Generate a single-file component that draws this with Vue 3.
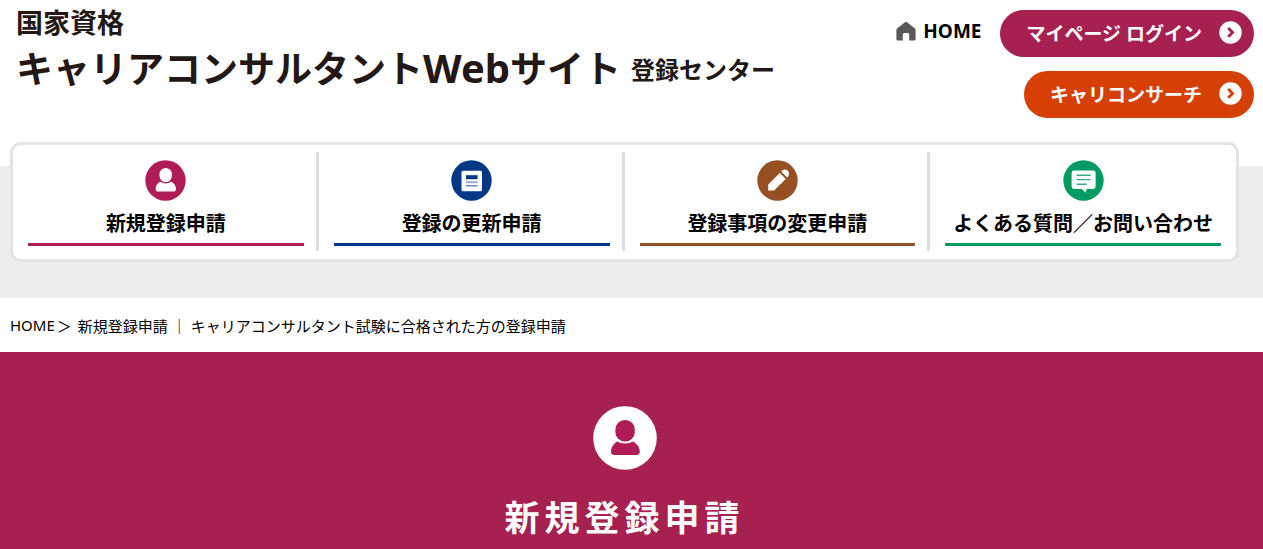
<script setup>
const menu = [
  { id: 'new', label: '新規登録申請', icon: 'person' },
  { id: 'renew', label: '登録の更新申請', icon: 'document' },
  { id: 'change', label: '登録事項の変更申請', icon: 'pencil' },
  { id: 'faq', label: 'よくある質問／お問い合わせ', icon: 'chat' },
]
const actions = [
  { id: 'login', label: 'マイページ ログイン' },
  { id: 'search', label: 'キャリコンサーチ' },
]
</script>

<template>
  <div class="page">
    <header class="header">
      <a class="logo" href="#">
        <span class="logo-top">国家資格</span>
        <span class="logo-main">
          <span class="logo-name">キャリアコンサルタント<span class="logo-web">Web</span>サイト</span>
          <span class="logo-sub">登録センター</span>
        </span>
      </a>
      <div class="tools">
        <a class="home" href="#">
          <svg width="20" height="20" viewBox="0 0 20 20" aria-hidden="true">
            <path d="M10 0.5 L19 7.4 Q19.6 8 19.6 9 V18 Q19.6 19.5 18 19.5 H13.2 V13.5 Q13.2 12 11.8 12 H8.2 Q6.8 12 6.8 13.5 V19.5 H2 Q0.4 19.5 0.4 18 V9 Q0.4 8 1 7.4 Z" fill="#595757" />
          </svg>
          HOME
        </a>
        <div class="actions">
          <a v-for="a in actions" :key="a.id" class="pill" :class="a.id" href="#">
            {{ a.label }}
            <svg width="23" height="23" viewBox="0 0 23 23" aria-hidden="true">
              <circle cx="11.5" cy="11.5" r="11.2" fill="#fff" />
              <path d="M9.2 7 L13.6 11.4 L9.2 15.8" fill="none" stroke="currentColor" stroke-width="2.8" />
            </svg>
          </a>
        </div>
      </div>
    </header>

    <div class="band">
      <nav class="menu">
        <div v-for="m in menu" :key="m.id" class="cell">
          <a class="item" :class="m.id" href="#">
            <svg width="41" height="41" viewBox="0 0 41 41" aria-hidden="true">
              <circle cx="20.5" cy="20.5" r="20.2" fill="currentColor" />
              <g v-if="m.icon === 'person'" fill="#fff">
                <rect x="14.5" y="8" width="12.4" height="14.2" rx="6.2" />
                <path d="M15.5 21.6 Q20.7 25 25.9 21.6 Q31 24.5 31 29 Q31 31.6 29 31.6 H12.6 Q10.6 31.6 10.6 29 Q10.6 24.5 15.5 21.6 Z" />
                <path d="M15 21.2 Q20.7 24.8 26.4 21.2" fill="none" stroke="currentColor" stroke-width="0.8" />
              </g>
              <g v-else-if="m.icon === 'document'">
                <rect x="10.5" y="10.8" width="20.5" height="20.5" rx="1.5" fill="#fff" />
                <rect x="15" y="15.2" width="11.6" height="4" fill="currentColor" />
                <rect x="15" y="21.2" width="11.6" height="2" fill="currentColor" opacity=".4" />
                <rect x="15" y="25.2" width="11.6" height="1.2" fill="currentColor" opacity=".75" />
              </g>
              <g v-else-if="m.icon === 'pencil'" fill="#fff">
                <path d="M11.2 30.6 V24.6 L22.8 13 L28.8 19 L17 30.6 Z" />
                <path d="M24.2 11.6 Q26.2 9.3 28.2 9.6 Q31.8 10.4 32 13.4 Q32.1 15.7 30.2 17.6 Z" />
              </g>
              <g v-else>
                <path d="M11 10.6 H30.2 Q32.6 10.6 32.6 13 V26.6 Q32.6 29 30.2 29 H23.6 L22.6 32.8 L18.8 29 H11 Q8.6 29 8.6 26.6 V13 Q8.6 10.6 11 10.6 Z" fill="#fff" />
                <path d="M13.6 15.3 H27.6 M13.6 19.6 H27.6 M13.6 24.2 H23.8" stroke="currentColor" stroke-width="1.4" opacity=".8" />
              </g>
            </svg>
            <span class="item-label">{{ m.label }}</span>
          </a>
        </div>
      </nav>
    </div>

    <nav class="crumbs" aria-label="パンくず">
      <a href="#">HOME</a><span class="arrow">＞</span><span class="crumb">新規登録申請</span>
      <span class="bar">｜</span><span>キャリアコンサルタント試験に合格された方の登録申請</span>
    </nav>

    <main class="hero">
      <svg width="64" height="64" viewBox="0 0 64 64" aria-hidden="true">
        <circle cx="32" cy="32" r="31.8" fill="#fff" />
        <rect x="22.4" y="14" width="19.4" height="21.4" rx="9.4" fill="#b01c55" />
        <path d="M24.6 35 Q32 39.2 39.6 35 Q46.8 39.4 46.8 45.6 Q46.8 49 43.6 49 H21.4 Q18 49 18 45.6 Q18 39.4 24.6 35 Z" fill="#b01c55" />
        <path d="M23.6 34.4 Q32 39.6 40.6 34.4" fill="none" stroke="#fff" stroke-width="1.2" />
      </svg>
      <h1>新規登録申請</h1>
    </main>
  </div>
</template>

<style>
body {
  margin: 0;
  background: #fff;
}
</style>

<style scoped>
.page {
  font-family: "Noto Sans", "Noto Sans CJK JP", sans-serif;
  color: #000;
}
a {
  color: inherit;
  text-decoration: none;
}
svg {
  display: block;
  flex: none;
}
.header {
  display: flex;
  justify-content: space-between;
  align-items: flex-start;
  height: 166px;
  padding: 0 9px 0 16px;
  box-sizing: border-box;
  white-space: nowrap;
}
.logo {
  display: flex;
  flex-direction: column;
  color: #231815;
  padding-top: 8px;
  font-weight: 700;
}
.logo-top {
  font-size: 27px;
  line-height: 30px;
}
.logo-main {
  display: flex;
  align-items: center;
  gap: 10px;
  line-height: 56px;
}
.logo-name {
  font-size: 37px;
}
.logo-web {
  font-size: 40px;
}
.logo-sub {
  padding-top: 4px;
  font-size: 24px;
}
.tools {
  display: flex;
  align-items: flex-start;
  gap: 19px;
  padding-top: 10px;
}
.home {
  display: flex;
  align-items: center;
  gap: 7px;
  height: 42px;
  font-size: 19px;
  font-weight: 700;
}
.actions {
  display: flex;
  flex-direction: column;
  align-items: flex-end;
  gap: 14px;
}
.pill {
  display: flex;
  align-items: center;
  gap: 17px;
  height: 47px;
  padding: 0 12px 2px 26px;
  box-sizing: border-box;
  border-radius: 24px;
  color: #fff;
  font-size: 19px;
  font-weight: 700;
}
.login {
  background: #a62050;
}
.search {
  background: #d64006;
}
.login svg {
  color: #a62050;
}
.search svg {
  color: #d64006;
}
.band {
  background: #ededed;
  padding: 0 24px 36px 10px;
}
.band::before {
  content: "";
  display: table;
}
.menu {
  display: grid;
  grid-template-columns: repeat(4, 1fr);
  position: relative;
  margin-top: -24px;
  padding: 7px 0 8px;
  border: 3px solid #e3e5e5;
  border-radius: 11px;
  background: #fff;
}
.cell {
  height: 99px;
  padding: 0 12px 0 15px;
  border-right: 3px solid #dcdddd;
  box-sizing: border-box;
}
.cell:last-child {
  padding-right: 15px;
  border-right: 0;
}
.item {
  display: flex;
  flex-direction: column;
  align-items: center;
  padding: 8px 0 4px;
  border-bottom: 3px solid currentColor;
}
.item-label {
  margin-top: 8px;
  color: #000;
  font-size: 20px;
  line-height: 30px;
  font-weight: 700;
  white-space: nowrap;
}
.new {
  color: #b01c55;
}
.renew {
  color: #003885;
}
.change {
  color: #965023;
}
.faq {
  color: #009b63;
}
.crumbs {
  display: flex;
  align-items: center;
  height: 54px;
  font-size: 15px;
  padding: 0 10px;
  white-space: nowrap;
}
.arrow {
  margin-left: 2px;
}
.crumb {
  margin-left: 6px;
}
.bar {
  margin: 0 4px;
}
.hero {
  display: flex;
  flex-direction: column;
  align-items: center;
  padding: 54px 24px 6px 10px;
  background: #a62050;
  color: #fff;
}
h1 {
  margin: 23px 0 0;
  font-size: 35px;
  line-height: 50px;
  font-weight: 700;
  letter-spacing: 5px;
}
</style>
